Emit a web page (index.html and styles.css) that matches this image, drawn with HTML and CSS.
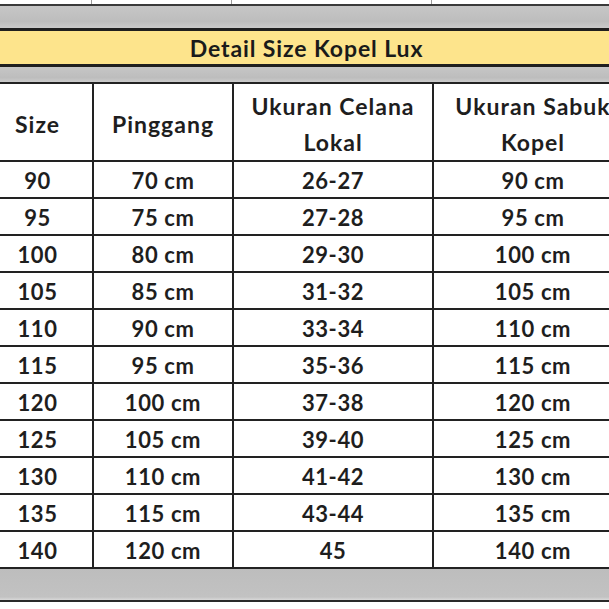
FILE: index.html
```html
<!DOCTYPE html>
<html>
<head>
<meta charset="utf-8">
<link rel="stylesheet" href="styles.css">
</head>
<body>
<div class="sheet">
  <div class="prev">
    <div class="pc"></div><div class="pc"></div><div class="pc"></div><div class="pc last"></div>
  </div>
  <div class="gray top"></div>
  <div class="title">Detail Size Kopel Lux</div>
  <div class="gray mid"></div>
  <table class="size">
    <thead>
      <tr>
        <th class="c1">Size</th>
        <th class="c2">Pinggang</th>
        <th class="c3 two">Ukuran Celana<br>Lokal</th>
        <th class="c4 two">Ukuran Sabuk<br>Kopel</th>
      </tr>
    </thead>
    <tbody>
      <tr><td>90</td><td>70 cm</td><td>26-27</td><td>90 cm</td></tr>
      <tr><td>95</td><td>75 cm</td><td>27-28</td><td>95 cm</td></tr>
      <tr><td>100</td><td>80 cm</td><td>29-30</td><td>100 cm</td></tr>
      <tr><td>105</td><td>85 cm</td><td>31-32</td><td>105 cm</td></tr>
      <tr><td>110</td><td>90 cm</td><td>33-34</td><td>110 cm</td></tr>
      <tr><td>115</td><td>95 cm</td><td>35-36</td><td>115 cm</td></tr>
      <tr><td>120</td><td>100 cm</td><td>37-38</td><td>120 cm</td></tr>
      <tr><td>125</td><td>105 cm</td><td>39-40</td><td>125 cm</td></tr>
      <tr><td>130</td><td>110 cm</td><td>41-42</td><td>130 cm</td></tr>
      <tr><td>135</td><td>115 cm</td><td>43-44</td><td>135 cm</td></tr>
      <tr><td>140</td><td>120 cm</td><td>45</td><td>140 cm</td></tr>
    </tbody>
  </table>
  <div class="gray bottom"></div>
</div>
</body>
</html>
```

FILE: styles.css
```css
html, body {
  margin: 0;
  padding: 0;
  background: #fff;
  overflow: hidden;
}
body {
  width: 609px;
  height: 609px;
  font-family: "Lato", "Open Sans", sans-serif;
  font-weight: 700;
  color: #1e1e1e;
}
.sheet {
  width: 651px;
  margin-left: -19px;
}
.prev {
  display: grid;
  grid-template-columns: 111px 140px 200px 200px;
  height: 4px;
  border-bottom: 2px solid #3a3a3a;
}
.pc {
  border-right: 1px solid #9a9a9a;
}
.gray {
  background: linear-gradient(#c6c6c6, #bdbdbd 70%, #cacaca);
}
.gray.top {
  height: 22px;
  border-bottom: 3px solid #1f1f1f;
}
.title {
  height: 33px;
  background: #fde48c;
  border-bottom: 3px solid #1f1f1f;
  display: flex;
  align-items: center;
  justify-content: center;
  font-size: 23px;
  letter-spacing: 0.9px;
  color: #1a1a1a;
}
.gray.mid {
  height: 15px;
  border-bottom: 2px solid #222;
}
table.size {
  border-collapse: collapse;
  table-layout: fixed;
  width: 651px;
}
table.size th, table.size td {
  border: 2px solid #222;
  text-align: center;
  padding: 0;
  font-size: 22px;
  letter-spacing: 0.6px;
  font-weight: 700;
}
table.size tr:first-child th { border-top: none; }
table.size th {
  height: 70px;
  line-height: 36px;
  padding-top: 4px;
  font-size: 23px;
  letter-spacing: 1px;
}
table.size td {
  height: 32px;
  line-height: 32px;
  padding-top: 3px;
}
.c1 { width: 109px; }
.c2 { width: 138px; }
.c3 { width: 198px; }
.c4 { width: 198px; }
.gray.bottom {
  height: 31px;
  border-bottom: 2px solid #2a2a2a;
  background: linear-gradient(#bdbdbd, #c2c2c2 90%, #d8d8d8);
}
```
